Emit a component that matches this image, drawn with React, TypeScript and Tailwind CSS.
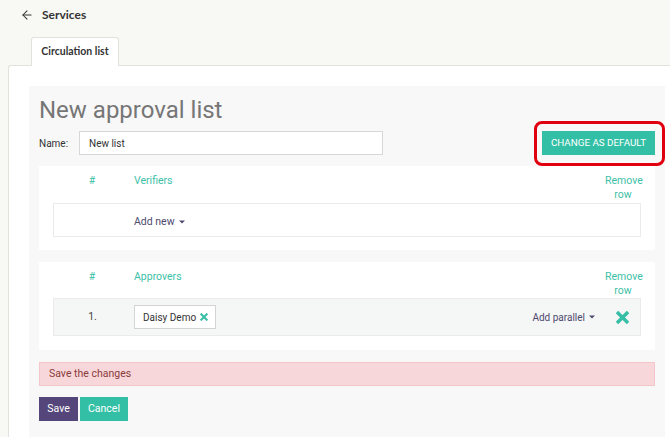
import { ArrowLeft } from 'lucide-react';

function Caret() {
  return (
    <svg className="ml-[4px] inline-block" width="6" height="4" viewBox="0 0 6 4">
      <path d="M0 0.5 L6 0.5 L3 3.5 Z" fill="currentColor" />
    </svg>
  );
}

function BoldX({ size, className }: { size: number; className?: string }) {
  return (
    <svg className={className} width={size} height={size} viewBox="0 0 12 12">
      <path d="M2 2 L10 10 M10 2 L2 10" stroke="currentColor" strokeWidth="3.2" strokeLinecap="square" />
    </svg>
  );
}

function ListHeader({ title }: { title: string }) {
  return (
    <div className="flex items-start text-[10.5px] leading-[14px] text-[#3dbfa7]">
      <div className="w-[78px] text-center">#</div>
      <div className="flex-1 pl-[3px]">{title}</div>
      <div className="w-[36px] text-center">
        Remove
        <br />
        row
      </div>
    </div>
  );
}

export default function App() {
  return (
    <div className="min-h-[437px] bg-[#f8f8f4] font-['Roboto',sans-serif] text-[#333]">
      {/* Header */}
      <div className="flex h-[30px] items-center pl-5 font-['Lato',sans-serif] text-[12px] font-bold text-[#333]">
        <ArrowLeft className="mr-2 h-[14px] w-[14px]" strokeWidth={1.8} />
        <span>Services</span>
      </div>

      {/* Tabs */}
      <div className="mt-[7px] flex pl-[31px]">
        <div className="relative z-10 -mb-px flex h-[29px] w-[88px] items-center justify-center rounded-t-[3px] border border-b-0 border-[#e2e2dc] bg-white font-['Lato',sans-serif] text-[10.5px] font-bold text-[#333]">
          Circulation list
        </div>
      </div>

      {/* Panel */}
      <div className="ml-2 rounded-tl-[3px] border-l border-t border-[#e2e2dc] bg-white pl-5 pr-[5px] pt-5">
        <div className="bg-[#f8f8f8] px-[10px] pb-6 pt-[9px]">
          <h1 className="h-[30px] text-[24px] leading-[30px] font-normal text-[#767676]">New approval list</h1>

          <div className="mt-[6px] flex h-[24px] items-center">
            <label className="w-[40px] text-[10px] text-[#333]">Name:</label>
            <div className="flex h-[24px] w-[304px] items-center border border-[#d7d7d7] bg-white pl-[9px] text-[10px] text-[#333]">
              New list
            </div>
            <div className="ml-auto">
              <div className="relative">
                <button className="flex h-[24px] w-[113px] items-center justify-center bg-[#33bfa6] text-[9.8px] uppercase text-white">
                  Change as default
                </button>
                <div className="pointer-events-none absolute -bottom-[11px] -left-[8px] -right-[10px] -top-[10px] rounded-[8px] border-[3px] border-[#e1000f]" />
              </div>
            </div>
          </div>

          {/* Verifiers */}
          <div className="mt-[11px] bg-white px-[14px] pb-[13px] pt-2">
            <ListHeader title="Verifiers" />
            <div className="mt-px flex h-[34px] items-center border border-[#ebebeb] bg-white pt-[3px] text-[10.5px]">
              <div className="w-[77px]" />
              <div className="flex items-center pl-[3px] text-[#4d4a6e]">
                Add new
                <Caret />
              </div>
            </div>
          </div>

          {/* Approvers */}
          <div className="mt-3 bg-white px-[14px] pb-[14px] pt-2">
            <ListHeader title="Approvers" />
            <div className="flex h-[38px] items-center border border-[#ebebeb] bg-[#f5f6f6] text-[10.5px]">
              <div className="w-[77px] text-center text-[#444]">1.</div>
              <div className="pl-[3px]">
                <div className="flex h-[24px] items-center border border-[#d4d4d4] bg-white pl-[8px] pr-[7px] text-[10px] text-[#333]">
                  Daisy Demo
                  <BoldX size={8} className="ml-[4px] text-[#3dbfa7]" />
                </div>
              </div>
              <div className="ml-auto mr-[10px] flex items-center text-[10px] text-[#4d4a6e]">
                Add parallel
                <Caret />
              </div>
              <div className="flex w-[35px] justify-center">
                <BoldX size={13} className="text-[#36bfa6]" />
              </div>
            </div>
          </div>

          {/* Alert */}
          <div className="mt-3 flex h-[24px] items-center border border-[#f3c6ca] bg-[#f8d7da] pl-[9px] text-[10.5px] text-[#8a3b3b]">
            Save the changes
          </div>

          {/* Actions */}
          <div className="mt-[11px] flex gap-[2px]">
            <button className="h-[24px] w-[39px] bg-[#54467b] text-[10.5px] text-white">Save</button>
            <button className="h-[24px] w-[48px] bg-[#33bfa6] text-[10.5px] text-white">Cancel</button>
          </div>
        </div>
      </div>
    </div>
  );
}
